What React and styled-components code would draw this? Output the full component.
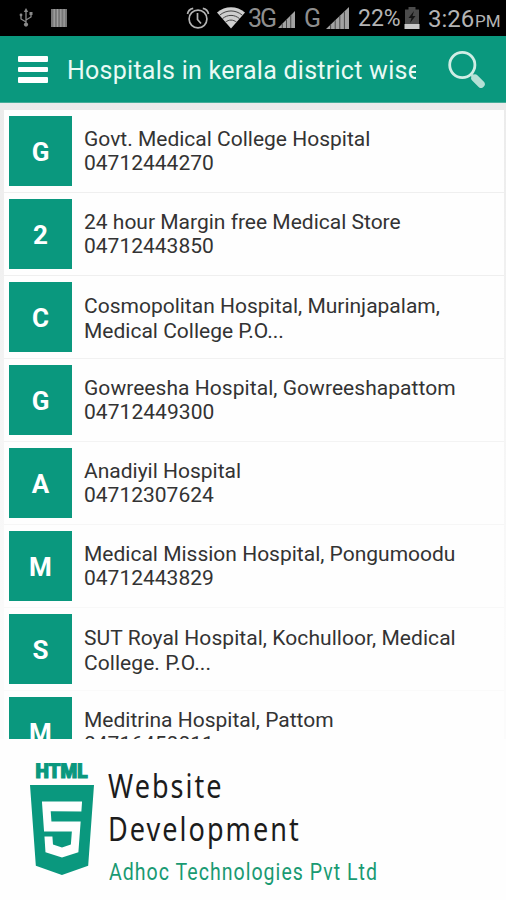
import React from "react";
import styled, { createGlobalStyle } from "styled-components";
import { SiHtml5 } from "react-icons/si";

const GlobalStyle = createGlobalStyle`
    * {
        box-sizing: border-box;
    }
    body {
        margin: 0;
        background-color: #fefefe;
        font-family: Roboto, "Noto Sans", sans-serif;
    }
`;

const Screen = styled.div`
    display: flex;
    flex-direction: column;
    width: 506px;
    height: 900px;
    overflow: hidden;
`;

const StatusBar = styled.div`
    display: flex;
    align-items: center;
    justify-content: space-between;
    height: 36px;
    // top, right, bottom, left
    padding: 0 7px 0 19px;
    background-color: #000;
    svg {
        display: block;
        flex: none;
    }
`;

const StatusGroup = styled.div`
    display: flex;
    align-items: center;
`;

const StatusText = styled.span`
    display: block;
    width: ${(props) => props.$width}px;
    margin-left: ${(props) => props.$gap}px;
    color: ${(props) => props.$color || "#b4b4b4"};
    font-size: ${(props) => props.$size || 23}px;
    letter-spacing: ${(props) => props.$spacing || 0}px;
    line-height: 34px;
    white-space: nowrap;
    padding-top: ${(props) => props.$drop || 2}px;
`;

const StatusIcon = styled.span`
    margin-left: ${(props) => props.$gap || 0}px;
    padding-top: ${(props) => props.$drop || 0}px;
`;

const Header = styled.header`
    display: flex;
    align-items: center;
    height: 67px;
    padding: 0 18px 0 18px;
    background-color: #0a987e;
    border-bottom: 1px solid #45ad99;
`;

const MenuButton = styled.button`
    display: flex;
    flex-direction: column;
    gap: 5px;
    width: 30px;
    padding: 0;
    margin-top: 1px;
    border: 0;
    background: none;
    span {
        height: 5.5px;
        border-radius: 1px;
        background-color: #fff;
    }
`;

const HeaderTitle = styled.h1`
    width: 349px;
    margin: 4px 0 0 19px;
    overflow: hidden;
    color: #e9faf5;
    font-size: 25px;
    font-weight: 400;
    line-height: 34px;
    letter-spacing: 0.26px;
    white-space: nowrap;
`;

const SearchButton = styled.button`
    margin-left: 32px;
    padding: 0;
    border: 0;
    background: none;
    svg {
        display: block;
    }
`;

const ListArea = styled.main`
    height: 636px;
    padding: 7px 2px 0 4px;
    overflow: hidden;
    background: linear-gradient(#ebebeb, #f1f1f1 30%, #fbfbfb 85%);
`;

const Row = styled.div`
    display: flex;
    height: 83px;
    padding: 6px 0 0 5px;
    background-color: #fefefe;
    border-bottom: 1px solid ${(props) => props.$line};
`;

const Tile = styled.div`
    display: flex;
    align-items: center;
    justify-content: center;
    width: 63px;
    height: 70px;
    padding-top: 1px;
    background-color: #0a987e;
    color: #fff;
    font-size: 26px;
    font-weight: 700;
`;

const RowText = styled.div`
    padding: 12px 0 0 12px;
    color: #333;
    font-size: 21px;
    line-height: ${(props) => (props.$wrapped ? 24.5 : 23.5)}px;
    white-space: nowrap;
`;

const Line = styled.div`
    letter-spacing: ${(props) => props.$spacing || 0}px;
`;

const Banner = styled.footer`
    display: flex;
    height: 161px;
    padding: 24px 0 0 30px;
    background-color: #fefefe;
`;

const Logo = styled.div`
    display: flex;
    flex-direction: column;
    width: 64px;
    color: #0a987e;
`;

const Shield = styled(SiHtml5)`
    width: 64px;
    height: 90px;
`;

const BannerText = styled.div`
    padding-left: 14px;
`;

const BannerTitle = styled.div`
    color: #1c1c1c;
    font-family: "Noto Sans", sans-serif;
    font-size: 32px;
    line-height: 43px;
    letter-spacing: 2.4px;
    white-space: nowrap;
    transform: translateY(1px) scaleX(0.845);
    transform-origin: left;
`;

const BannerCompany = styled.div`
    margin: 8px 0 0 1px;
    color: #199a72;
    font-size: 23px;
    line-height: 32px;
    letter-spacing: 1.2px;
    white-space: nowrap;
    transform: scaleX(0.85);
    transform-origin: left;
`;

const hospitals = [
    { letter: "G", lines: ["Govt. Medical College Hospital", "04712444270"], line: "#efefef" },
    { letter: "2", lines: ["24 hour Margin free Medical Store", "04712443850"], line: "#efefef" },
    { letter: "C", lines: ["Cosmopolitan Hospital, Murinjapalam,", "Medical College P.O..."], wrapped: true, line: "#f1f1f1" },
    { letter: "G", lines: ["Gowreesha Hospital, Gowreeshapattom", "04712449300"], line: "#f3f3f3", spacing: 0.05 },
    { letter: "A", lines: ["Anadiyil Hospital", "04712307624"], line: "#f6f6f6" },
    { letter: "M", lines: ["Medical Mission Hospital, Pongumoodu", "04712443829"], line: "#f8f8f8" },
    { letter: "S", lines: ["SUT Royal Hospital, Kochulloor, Medical", "College. P.O..."], wrapped: true, line: "#fafafa", spacing: 0.06 },
    { letter: "M", lines: ["Meditrina Hospital, Pattom", "04716450011"], line: "#fafafa" },
];

const UsbIcon = () => (
    <svg width="14" height="20" viewBox="0 0 14 20" fill="none" stroke="#8a8a8a" strokeWidth="1.3">
        <path d="M7 3v13M7 14L2 11V7M7 12l5-3V6" />
        <path d="M7 0L4.8 4h4.4z" fill="#8a8a8a" stroke="none" />
        <circle cx="7" cy="16.6" r="2.1" fill="#8a8a8a" stroke="none" />
        <circle cx="2" cy="7" r="1.4" fill="#8a8a8a" stroke="none" />
        <path d="M10.5 4h3v3h-3z" fill="#8a8a8a" stroke="none" />
    </svg>
);

const BarsIcon = () => (
    <svg width="16" height="18" viewBox="0 0 16 18">
        <rect width="16" height="18" fill="#777" />
        <path d="M3.2 0v18M6.5 0v18M9.8 0v18M13.1 0v18" stroke="#a0a0a0" strokeWidth="1.3" />
    </svg>
);

const AlarmIcon = () => (
    <svg width="24" height="24" viewBox="0 0 24 24" fill="none" stroke="#b4b4b4" strokeWidth="1.7">
        <circle cx="12" cy="13" r="8.9" />
        <path d="M11.5 7v6.5l3.5 4M1.5 8c.5-3 2.5-5 5.7-5.6M22.5 8c-.5-3-2.5-5-5.7-5.6" />
    </svg>
);

const WifiIcon = () => (
    <svg width="28" height="22" viewBox="0 0 28 22">
        <path d="M0 5.5C8-1.4 20-1.4 28 5.5L14 21.5z" fill="#cfcfcf" />
        <path
            d="M2.5 8.3C9.5 2.5 18.5 2.5 25.5 8.3M5.4 11.7c5.2-4.4 12-4.4 17.2 0M8.4 15.2c3.4-2.8 7.8-2.8 11.2 0"
            fill="none"
            stroke="#444"
            strokeWidth="1"
        />
    </svg>
);

// solid wedge with thin darker seams between the bars
const SignalIcon = ({ width, height, bars }) => {
    const seams = Array.from({ length: bars - 1 }, (_, i) => (i + 1) / bars);
    return (
        <svg width={width} height={height}>
            <polygon points={`0,${height} ${width},0 ${width},${height}`} fill="#a2a2a2" />
            {seams.map((part) => (
                <rect
                    key={part}
                    x={part * width - 0.5}
                    y={height - part * height}
                    width="1"
                    height={part * height}
                    fill="#4a4a4a"
                />
            ))}
        </svg>
    );
};

const BatteryIcon = () => (
    <svg width="16" height="22" viewBox="0 0 16 22">
        <path d="M4.5 0h7v2.5H15V22H1V2.5h3.5z" fill="#4b4b4b" />
        <path d="M10 4L4.5 11h3L6 16l5.5-7H8.5z" fill="#141414" />
        <rect x="0.5" y="17" width="15" height="5" fill="#cacaca" />
    </svg>
);

const SearchIcon = () => (
    <svg width="38" height="38" viewBox="0 0 38 38" fill="none">
        <circle cx="14.3" cy="15" r="12.6" stroke="#d0ede5" strokeWidth="2.8" />
        <path d="M23.3 24.5l3 3" stroke="#b9e3d8" strokeWidth="3" />
        <path d="M27 28.2l6 6" stroke="#b4e0d5" strokeWidth="7.5" strokeLinecap="round" />
    </svg>
);

const App = () => {
    return (
        <>
            <GlobalStyle />
            <Screen>
                <StatusBar>
                    <StatusGroup>
                        <UsbIcon />
                        <StatusIcon $gap={18}>
                            <BarsIcon />
                        </StatusIcon>
                    </StatusGroup>
                    <StatusGroup>
                        <AlarmIcon />
                        <StatusIcon $gap={7}>
                            <WifiIcon />
                        </StatusIcon>
                        <StatusText $width={26} $gap={3} $size={25} $spacing={-2} $color="#8e8e8e">3G</StatusText>
                        <StatusIcon $gap={4} $drop={2}>
                            <SignalIcon width={17} height={17} bars={4} />
                        </StatusIcon>
                        <StatusText $width={17} $gap={9} $size={25} $color="#8e8e8e">G</StatusText>
                        <StatusIcon $gap={5}>
                            <SignalIcon width={23} height={22} bars={5} />
                        </StatusIcon>
                        <StatusText $width={41} $gap={9}>22%</StatusText>
                        <StatusIcon $gap={5}>
                            <BatteryIcon />
                        </StatusIcon>
                        <StatusText $width={44} $gap={8} $size={24}>3:26</StatusText>
                        <StatusText $width={24} $gap={3} $size={17} $drop={6}>PM</StatusText>
                    </StatusGroup>
                </StatusBar>
                <Header>
                    <MenuButton aria-label="menu">
                        <span />
                        <span />
                        <span />
                    </MenuButton>
                    <HeaderTitle>Hospitals in kerala district wise</HeaderTitle>
                    <SearchButton aria-label="search">
                        <SearchIcon />
                    </SearchButton>
                </Header>
                <ListArea>
                    {hospitals.map((item, i) => (
                        <Row key={i} $line={item.line}>
                            <Tile>{item.letter}</Tile>
                            <RowText $wrapped={item.wrapped}>
                                {item.lines.map((text) => (
                                    <Line key={text} $spacing={item.spacing}>{text}</Line>
                                ))}
                            </RowText>
                        </Row>
                    ))}
                </ListArea>
                <Banner>
                    <Logo>
                        <svg width="64" height="22">
                            <text
                                x="5.500"
                                y="15"
                                textLength="52"
                                lengthAdjust="spacingAndGlyphs"
                                fontFamily="Roboto"
                                fontWeight="900"
                                fontSize="19.500"
                                fill="#0a987e"
                                stroke="#0a987e"
                                strokeWidth="1.2"
                            >
                                HTML
                            </text>
                        </svg>
                        <Shield viewBox="1.5 0 21 24" preserveAspectRatio="none" />
                    </Logo>
                    <BannerText>
                        <BannerTitle>Website</BannerTitle>
                        <BannerTitle>Development</BannerTitle>
                        <BannerCompany>Adhoc Technologies Pvt Ltd</BannerCompany>
                    </BannerText>
                </Banner>
            </Screen>
        </>
    );
};

export default App;
